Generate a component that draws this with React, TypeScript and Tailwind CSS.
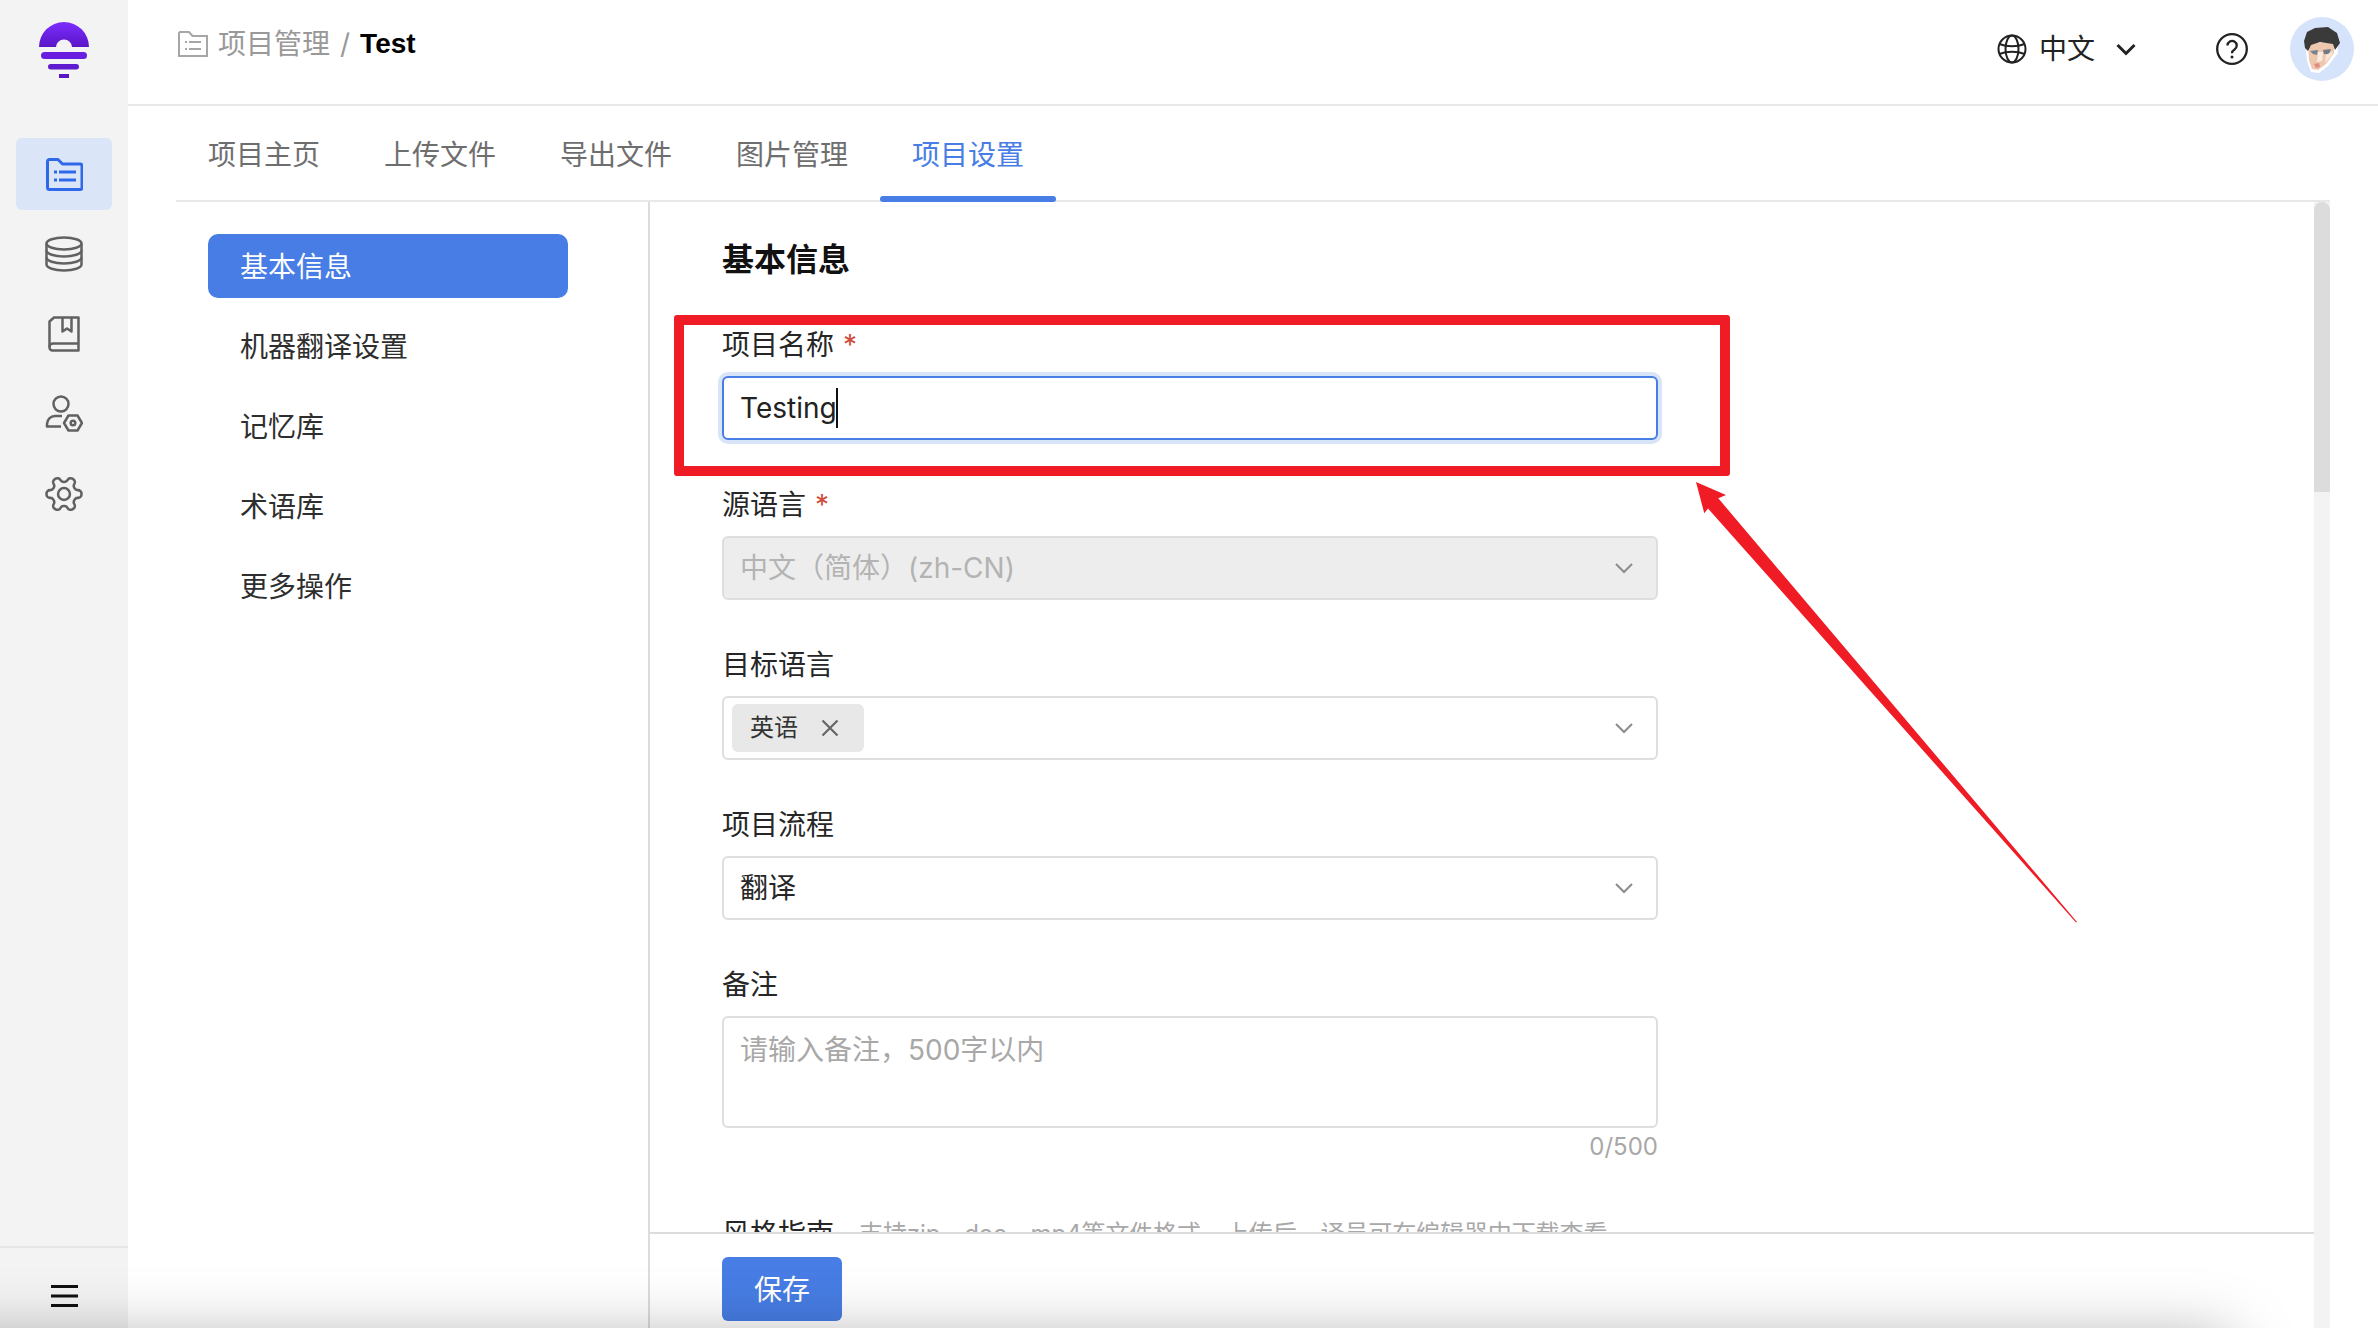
import React from "react";

const ChevronDown = () => (
  <svg width="20" height="12" viewBox="0 0 20 12" fill="none" className="shrink-0">
    <path d="M2 2l8 8 8-8" stroke="#8c8c8c" strokeWidth="2" />
  </svg>
);

const Logo = () => (
  <svg width="50" height="56" viewBox="0 0 50 56">
    <defs>
      <linearGradient id="lg" x1="0" y1="0" x2="0" y2="1">
        <stop offset="0" stopColor="#7c2dff" />
        <stop offset="1" stopColor="#5a16c6" />
      </linearGradient>
    </defs>
    <path d="M0 25A25 25 0 0 1 50 25H33A8 7.5 0 0 0 17 25Z" fill="url(#lg)" />
    <rect x="2" y="30" width="46" height="7" rx="3.5" fill="#6a1fe0" />
    <rect x="9" y="42" width="31" height="5.5" rx="2.75" fill="#5f1bd0" />
    <rect x="20" y="52" width="10" height="4" fill="#5a16c6" />
  </svg>
);

const FolderIcon = () => (
  <svg width="37" height="33" viewBox="0 0 37 33" fill="none" stroke="#2f68e8" strokeWidth="3" strokeLinejoin="round">
    <path d="M3.5 1.5h8.5l4.5 4.5h17.5a2 2 0 0 1 2 2v21.5a2 2 0 0 1-2 2h-30.5a2 2 0 0 1-2-2v-26a2 2 0 0 1 2-2z" />
    <path d="M8 14h3M13 14h17M8 22h3M13 22h17" />
  </svg>
);

const DbIcon = () => (
  <svg width="38" height="36" viewBox="0 0 38 36" fill="none" stroke="#616161" strokeWidth="2.5">
    <ellipse cx="19" cy="7.5" rx="17.5" ry="6" />
    <path d="M1.5 7.5v21c0 3.3 7.8 6 17.5 6s17.500-2.700 17.500-6v-21" />
    <path d="M1.500 14.500c0 3.300 7.800 6 17.500 6s17.500-2.700 17.500-6M1.500 21.500c0 3.300 7.800 6 17.500 6s17.500-2.700 17.500-6" />
  </svg>
);

const BookIcon = () => (
  <svg width="32" height="36" viewBox="0 0 32 36" fill="none" stroke="#616161" strokeWidth="2.5" strokeLinejoin="round">
    <path d="M6 1.500h24.500v33h-26a3 3 0 0 1-3-3v-26z" />
    <path d="M1.500 31a3.500 3.500 0 0 1 3.500-3.500h25.500" />
    <path d="M14.500 1.500v14l4.500-3 4.500 3v-14" />
  </svg>
);

const UserIcon = () => (
  <svg width="38" height="38" viewBox="0 0 38 38" fill="none" stroke="#616161" strokeWidth="2.5" strokeLinejoin="round">
    <circle cx="16" cy="9" r="7.500" />
    <path d="M17 21h-7a8 8 0 0 0-8 8v2.500h14" />
    <path d="M22 28l4.500-7.500h9l4.500 7.500-4.500 7.500h-9z" transform="translate(-3 0)" />
    <circle cx="28" cy="28" r="2.300" />
  </svg>
);

const GearIcon = () => (
  <svg width="42" height="42" viewBox="0 0 24 24" fill="none" stroke="#616161" strokeWidth="1.450" className="rotate-90">
    <path d="M12.220 2h-.44a2 2 0 0 0-2 2v.18a2 2 0 0 1-1 1.730l-.43.25a2 2 0 0 1-2 0l-.15-.08a2 2 0 0 0-2.730.73l-.22.38a2 2 0 0 0 .73 2.730l.15.1a2 2 0 0 1 1 1.720v.51a2 2 0 0 1-1 1.740l-.15.09a2 2 0 0 0-.73 2.730l.22.38a2 2 0 0 0 2.730.73l.15-.08a2 2 0 0 1 2 0l.43.25a2 2 0 0 1 1 1.730V20a2 2 0 0 0 2 2h.44a2 2 0 0 0 2-2v-.18a2 2 0 0 1 1-1.730l.43-.25a2 2 0 0 1 2 0l.15.08a2 2 0 0 0 2.730-.73l.22-.39a2 2 0 0 0-.73-2.730l-.15-.08a2 2 0 0 1-1-1.740v-.5a2 2 0 0 1 1-1.740l.15-.09a2 2 0 0 0 .73-2.730l-.22-.38a2 2 0 0 0-2.730-.73l-.15.08a2 2 0 0 1-2 0l-.43-.25a2 2 0 0 1-1-1.730V4a2 2 0 0 0-2-2z" />
    <circle cx="12" cy="12" r="3.400" />
  </svg>
);

const Avatar = () => (
  <div className="w-[64px] h-[64px] rounded-full bg-[#d6e4fb] overflow-hidden shrink-0">
    <svg width="64" height="64" viewBox="0 0 64 64">
      <path d="M15 24L47 22L48 36L38 49L29 56L21 55L17 44Z" fill="#fff" />
      <path d="M18 26L44 25L44 36L36 47L28 53L22 52L19 43Z" fill="#edc7ae" />
      <path d="M14 24L17 15L25 11L38 10L47 16L50 26L45 33L43 27L30 25L21 28L18 34L15 31Z" fill="#3a3a3a" />
      <path d="M20 34L28 33L27 38L23 37Z" fill="#77838e" />
      <path d="M33 33L41 32L39 37L34 37Z" fill="#6f7b86" />
      <path d="M28 35L33 35L32 44L27 45Z" fill="#f9ebe1" />
      <path d="M36 38L43 34L42 38L35 46Z" fill="#f7e6da" />
      <path d="M24 47L29 46L30 50L26 51Z" fill="#e08c82" />
    </svg>
  </div>
);

const Field = ({ label, required, children }: { label: string; required?: boolean; children: React.ReactNode }) => (
  <div className="flex flex-col">
    <div className="h-[40px] pt-[1px] leading-[40px] text-[28px] text-[#262626] mb-[12px]">
      {label}
      {required && <span className="text-[#d14b3d] ml-[9px]">*</span>}
    </div>
    {children}
  </div>
);

const SelectBox = ({ disabled, children }: { disabled?: boolean; children: React.ReactNode }) => (
  <div className={`h-[64px] rounded-[6px] border-2 border-[#dedede] flex items-center justify-between pr-[22px] ${disabled ? "bg-[#ededed]" : "bg-white"}`}>
    {children}
    <ChevronDown />
  </div>
);

const tabs = ["项目主页", "上传文件", "导出文件", "图片管理", "项目设置"];
const menu = ["基本信息", "机器翻译设置", "记忆库", "术语库", "更多操作"];

export default function App() {
  return (
    <div
      lang="zh-CN"
      className="relative flex w-[2378px] h-[1328px] overflow-hidden bg-white [font-family:'Inter','Noto_Sans_CJK_SC',sans-serif]"
    >
      {/* Sidebar */}
      <aside className="w-[128px] shrink-0 bg-[#f3f3f3] flex flex-col items-center">
        <div className="mt-[22px] h-[56px]">
          <Logo />
        </div>
        <nav className="mt-[60px] flex flex-col gap-[8px]">
          <div className="w-[96px] h-[72px] rounded-[6px] bg-[#dae5f8] flex items-center justify-center"><FolderIcon /></div>
          <div className="w-[96px] h-[72px] flex items-center justify-center"><DbIcon /></div>
          <div className="w-[96px] h-[72px] flex items-center justify-center"><BookIcon /></div>
          <div className="w-[96px] h-[72px] flex items-center justify-center"><UserIcon /></div>
          <div className="w-[96px] h-[72px] flex items-center justify-center"><GearIcon /></div>
        </nav>
        <div className="mt-auto w-full h-[82px] border-t-2 border-[#e6e6e6] flex justify-center pt-[37px]">
          <svg width="27" height="22" viewBox="0 0 27 22" fill="#111">
            <rect y="0" width="27" height="3" />
            <rect y="9.500" width="27" height="3" />
            <rect y="19" width="27" height="3" />
          </svg>
        </div>
      </aside>

      {/* Main */}
      <main className="flex-1 min-w-0 flex flex-col">
        <header className="h-[106px] shrink-0 border-b-2 border-[#e8e8e8] flex justify-between pl-[50px] pr-[24px]">
          <div className="flex items-center h-[40px] mt-[24px] text-[28px] text-[#999]">
            <svg width="30" height="26" viewBox="0 0 30 26" fill="none" stroke="#a6a6a6" strokeWidth="2" className="mr-[10px]">
              <path d="M2 1h9l3.500 4H29v20H1V2z" />
              <path d="M7 11h2M11 11h12M7 18h2M11 18h12" />
            </svg>
            <span>项目管理</span>
            <span className="ml-[10px] mr-[10px]">/</span>
            <span className="font-bold text-black [font-family:'Liberation_Sans',sans-serif]">Test</span>
          </div>
          <div className="flex items-center h-[64px] mt-[17px]">
            <svg width="30" height="30" viewBox="0 0 30 30" fill="none" stroke="#222" strokeWidth="2">
              <circle cx="15" cy="15" r="13.500" />
              <ellipse cx="15" cy="15" rx="6.500" ry="13.500" />
              <path d="M2.500 10c7 3 18 3 25 0M2.500 20c7-3 18-3 25 0" />
            </svg>
            <span className="ml-[12px] text-[28px] text-[#222]">中文</span>
            <svg width="20" height="13" viewBox="0 0 20 13" fill="none" stroke="#222" strokeWidth="3" className="ml-[21px]">
              <path d="M1.500 2l8.500 8.500L18.500 2" />
            </svg>
            <svg width="32" height="32" viewBox="0 0 32 32" fill="none" stroke="#222" strokeWidth="2.300" className="ml-[80px]">
              <circle cx="16" cy="16" r="14.800" />
              <path d="M11.500 12.500a4.600 4.600 0 1 1 7 4c-1.600 1-2.500 1.800-2.500 3.800" />
              <circle cx="16" cy="24" r="1.500" fill="#222" stroke="none" />
            </svg>
            <div className="ml-[42px]"><Avatar /></div>
          </div>
        </header>

        <div className="flex-1 min-h-0 mx-[48px] flex flex-col">
          {/* Tabs */}
          <div className="h-[96px] shrink-0 border-b-2 border-[#e8e8e8] flex">
            {tabs.map((t, i) => (
              <div
                key={t}
                className={`relative h-[96px] px-[32px] pt-[1px] flex items-center text-[28px] ${i === 4 ? "text-[#477de4]" : "text-[#6e6e6e]"}`}
              >
                {t}
                {i === 4 && <div className="absolute left-0 right-0 bottom-0 h-[6px] rounded-[3px] bg-[#477de4]" />}
              </div>
            ))}
          </div>

          <div className="flex-1 min-h-0 flex">
            {/* Left menu */}
            <div className="w-[474px] shrink-0 border-r-2 border-[#dcdcdc] pl-[32px] pt-[32px]">
              <div className="w-[360px] flex flex-col gap-[16px]">
                {menu.map((m, i) => (
                  <div
                    key={m}
                    className={`h-[64px] rounded-[10px] pl-[32px] pt-[1px] flex items-center text-[28px] ${i === 0 ? "bg-[#477de4] text-white" : "text-[#2e2e2e]"}`}
                  >
                    {m}
                  </div>
                ))}
              </div>
            </div>

            {/* Content */}
            <div className="flex-1 min-w-0 flex flex-col">
              <div className="flex-1 min-h-0 overflow-hidden pl-[72px] pt-[34px]">
                <div className="w-[936px]">
                  <h2 className="h-[44px] pt-[2px] leading-[44px] text-[32px] font-bold text-[#111] mb-[44px]">基本信息</h2>
                  <div className="flex flex-col gap-[44px]">
                    <Field label="项目名称" required>
                      <div className="h-[64px] rounded-[6px] border-2 border-[#477de4] shadow-[0_0_0_4px_#d8e4f8] bg-white flex items-center pl-[16px] text-[28px] text-[#222]">
                        <span>Testing</span>
                        <span className="w-[2px] h-[40px] bg-[#111] ml-[-1px]" />
                      </div>
                    </Field>
                    <Field label="源语言" required>
                      <SelectBox disabled>
                        <span className="pl-[16px] text-[28px] text-[#b3b3b3]">中文（简体）(zh-CN)</span>
                      </SelectBox>
                    </Field>
                    <Field label="目标语言">
                      <SelectBox>
                        <div className="ml-[8px] h-[48px] rounded-[6px] bg-[#e8e8e8] flex items-center pl-[18px] pr-[25px] text-[24px] text-[#333]">
                          <span>英语</span>
                          <svg width="18" height="18" viewBox="0 0 18 18" fill="none" stroke="#666" strokeWidth="2.200" className="ml-[23px]">
                            <path d="M1.500 1.500l15 15M16.500 1.500l-15 15" />
                          </svg>
                        </div>
                      </SelectBox>
                    </Field>
                    <Field label="项目流程">
                      <SelectBox>
                        <span className="pl-[16px] text-[28px] text-[#262626]">翻译</span>
                      </SelectBox>
                    </Field>
                    <Field label="备注">
                      <div className="h-[112px] rounded-[6px] border-2 border-[#dedede] bg-white pl-[16px] pt-[12px] leading-[40px] text-[28px] text-[#a8a8a8]">
                        请输入备注，500字以内
                      </div>
                      <div className="mt-[4px] h-[30px] leading-[30px] text-right text-[24px] text-[#a8a8a8]">0/500</div>
                    </Field>
                    <div className="mt-[8px] h-[40px] leading-[40px] flex items-center">
                      <span className="text-[28px] text-[#262626]">风格指南</span>
                      <span className="ml-[25px] text-[24px] tracking-[-0.1px] text-[#a8a8a8]">支持zip、doc、mp4等文件格式，上传后，译员可在编辑器中下载查看</span>
                    </div>
                  </div>
                </div>
              </div>
              <div className="h-[96px] shrink-0 border-t-2 border-[#dcdcdc] pl-[72px] pt-[23px] bg-white">
                <button className="w-[120px] h-[64px] rounded-[6px] pt-[1px] bg-[#477de4] text-white text-[28px]">保存</button>
              </div>
            </div>

            {/* Scrollbar */}
            <div className="w-[16px] shrink-0 bg-[#f3f3f3]">
              <div className="h-[290px] rounded-t-full bg-[#dcdcdc]" />
            </div>
          </div>
        </div>
      </main>

      {/* Red annotation rectangle */}
      <div className="absolute left-[674px] top-[315px] w-[1056px] h-[161px] border-[10px] border-[#ef1c25] rounded-[3px] pointer-events-none" />

      {/* Red annotation arrow */}
      <svg className="absolute left-0 top-0 pointer-events-none" width="2378" height="1328" viewBox="0 0 2378 1328">
        <polygon points="1696,482 1726,495 1718.300,498.300 2077,922 2076,922.500 1708,508.500 1704.300,513.300" fill="#ef1c25" />
      </svg>

      {/* Window shadow along the bottom edge */}
      <div className="absolute left-[-200px] w-[2430px] top-[1340px] h-[200px] shadow-[0_0_60px_rgba(0,0,0,0.35)] pointer-events-none" />
    </div>
  );
}
